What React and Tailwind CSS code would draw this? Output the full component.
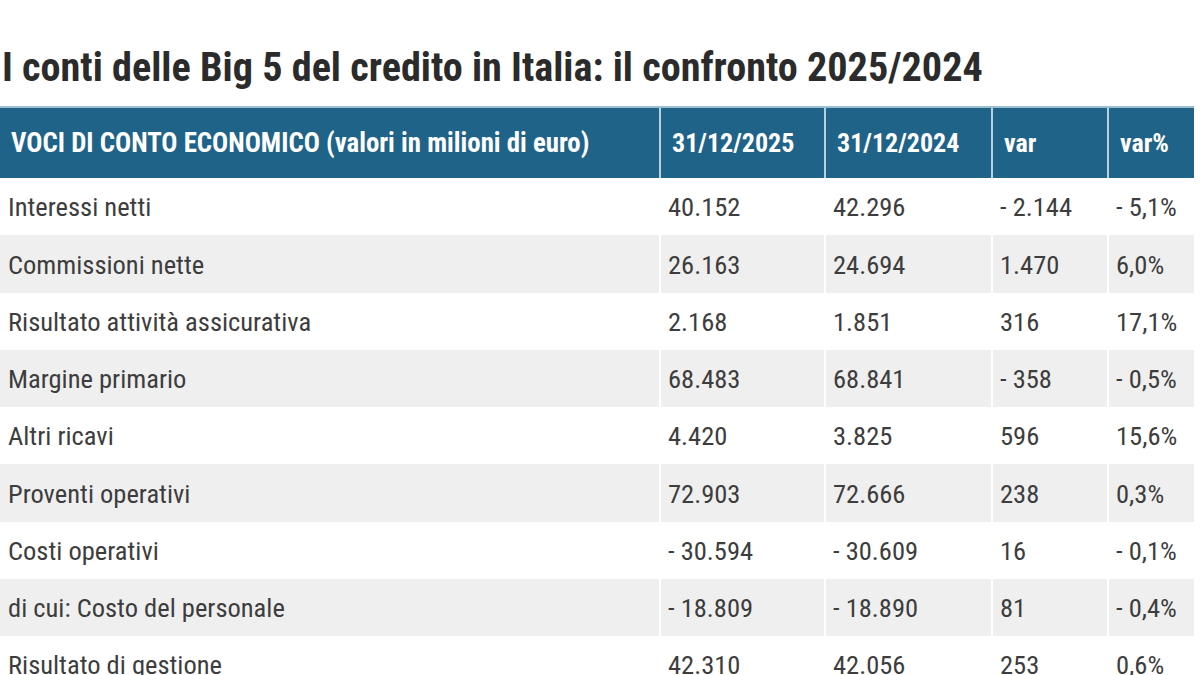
import React from "react";

const rows = [
  ["Interessi netti", "40.152", "42.296", "- 2.144", "- 5,1%"],
  ["Commissioni nette", "26.163", "24.694", "1.470", "6,0%"],
  ["Risultato attività assicurativa", "2.168", "1.851", "316", "17,1%"],
  ["Margine primario", "68.483", "68.841", "- 358", "- 0,5%"],
  ["Altri ricavi", "4.420", "3.825", "596", "15,6%"],
  ["Proventi operativi", "72.903", "72.666", "238", "0,3%"],
  ["Costi operativi", "- 30.594", "- 30.609", "16", "- 0,1%"],
  ["di cui: Costo del personale", "- 18.809", "- 18.890", "81", "- 0,4%"],
  ["Risultato di gestione", "42.310", "42.056", "253", "0,6%"],
];

const headers = [
  "VOCI DI CONTO ECONOMICO (valori in milioni di euro)",
  "31/12/2025",
  "31/12/2024",
  "var",
  "var%",
];

const font = {
  fontFamily: '"Roboto Condensed", "Liberation Sans Narrow", "DejaVu Sans Condensed", Roboto, sans-serif',
};

export default function App() {
  return (
    <div
      className="w-[1200px] h-[675px] overflow-hidden bg-white font-stretch-condensed"
      style={font}
    >
      <h1 className="pt-[44px] pl-[2px] h-[106px] text-[40.2px] leading-[48px] font-bold text-[#2b2b2b] whitespace-nowrap">
        I conti delle Big 5 del credito in Italia: il confronto 2025/2024
      </h1>
      <div className="w-[1194px]">
        <div className="grid grid-cols-[659px_165px_167px_116px_87px] h-[72px] bg-[#1f6389] border-t-2 border-[#9dbfd1]">
          {headers.map((h, i) => (
            <div
              key={i}
              className={`flex items-center pl-[11px] text-white font-bold whitespace-nowrap ${
                i > 0 ? "border-l-2 border-[#b9d1de] text-[26px]" : "text-[26.8px]"
              }`}
            >
              {h}
            </div>
          ))}
        </div>
        {rows.map((r, ri) => (
          <div
            key={ri}
            className={`grid grid-cols-[659px_165px_167px_116px_87px] h-[57.25px] ${
              ri % 2 === 1 ? "bg-[#efefef]" : "bg-white"
            }`}
          >
            {r.map((c, ci) => (
              <div
                key={ci}
                className={`flex items-center pt-[1px] text-[26.5px] text-[#3d3d3d] whitespace-nowrap ${
                  ci > 0 ? "border-l-2 border-white pl-[7px]" : "pl-[8px]"
                }`}
              >
                {c}
              </div>
            ))}
          </div>
        ))}
      </div>
    </div>
  );
}
